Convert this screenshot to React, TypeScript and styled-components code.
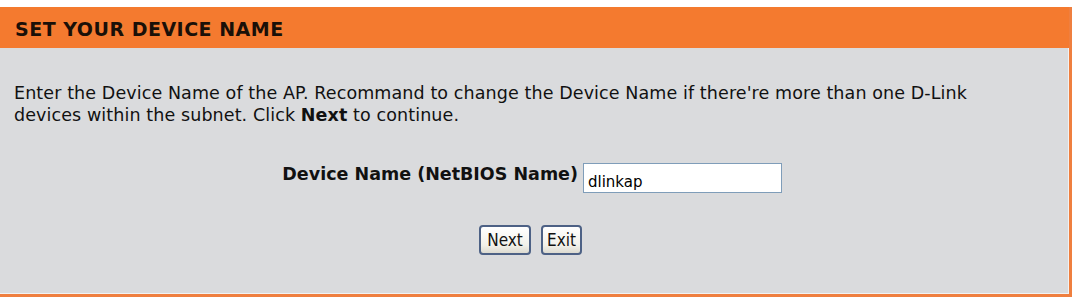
import React from "react";
import styled, { createGlobalStyle } from "styled-components";

const Global = createGlobalStyle`
  html, body { margin: 0; padding: 0; background: #ffffff; }
  body { font-family: "DejaVu Sans", Verdana, sans-serif; }
`;

const Page = styled.div`
  padding-top: 7px;
  width: 1076px;
  height: 301px;
  box-sizing: border-box;
`;

const Box = styled.section`
  width: 1072px;
  box-sizing: border-box;
  border-right: 3px solid #ef7f3f;
  border-bottom: 3px solid #ef7f3f;
  background: #dadbdd;
`;

const Header = styled.h2`
  margin: 0;
  height: 41px;
  box-sizing: border-box;
  display: flex;
  align-items: center;
  padding: 2px 0 0 15px;
  background: #f47a2f;
  color: #1a1008;
  font-family: "DejaVu Sans", Verdana, sans-serif;
  font-weight: bold;
  font-size: 19px;
  letter-spacing: 0.5px;
`;

const Body = styled.div`
  height: 246px;
  box-sizing: border-box;
  border-right: 1px solid #f2f2f2;
  border-bottom: 1px solid #f2f2f2;
  padding: 34px 14px 0 14px;
  display: flex;
  flex-direction: column;
`;

const Intro = styled.div`
  font-family: "DejaVu Sans", Verdana, sans-serif;
  font-size: 17.5px;
  line-height: 22px;
  letter-spacing: 0.1px;
  color: #111;
`;

const IntroLine = styled.div`
  white-space: nowrap;
`;

const FormRow = styled.div`
  margin-top: 37px;
  width: 768px;
  display: flex;
  justify-content: flex-end;
  align-items: flex-start;
  gap: 5px;
`;

const Label = styled.label`
  font-family: "DejaVu Sans", Verdana, sans-serif;
  font-weight: bold;
  font-size: 17.5px;
  line-height: 22px;
  color: #111;
`;

const TextInput = styled.input`
  width: 199px;
  height: 30px;
  box-sizing: border-box;
  border: 1px solid #7f9db9;
  background: #fff;
  padding: 7px 4px 0 4px;
  font-family: "DejaVu Sans", Verdana, sans-serif;
  font-size: 15px;
  color: #000;
  outline: none;
`;

const Buttons = styled.div`
  margin-top: 32px;
  display: flex;
  justify-content: center;
  gap: 10px;
  padding-right: 7px;
`;

const Btn = styled.button<{ $w: number }>`
  width: ${(p) => p.$w}px;
  height: 30px;
  box-sizing: border-box;
  border: 2px solid #4d6185;
  border-radius: 4px;
  background: linear-gradient(#ffffff, #f2f1ea 70%, #dcdad0);
  font-family: "DejaVu Sans Condensed", "DejaVu Sans", sans-serif;
  font-size: 17px;
  color: #111;
  padding: 0;
`;

export default function App() {
  return (
    <>
      <Global />
      <Page>
        <Box>
          <Header>SET YOUR DEVICE NAME</Header>
          <Body>
            <Intro>
              <IntroLine>
                Enter the Device Name of the AP. Recommand to change the Device Name if
                there're more than one D-Link
              </IntroLine>
              <IntroLine>
                <span>devices within the subnet. Click </span>
                <b>Next</b>
                <span> to continue.</span>
              </IntroLine>
            </Intro>
            <FormRow>
              <Label htmlFor="dn">Device Name (NetBIOS Name)</Label>
              <TextInput id="dn" defaultValue="dlinkap" />
            </FormRow>
            <Buttons>
              <Btn $w={52}>Next</Btn>
              <Btn $w={41}>Exit</Btn>
            </Buttons>
          </Body>
        </Box>
      </Page>
    </>
  );
}
